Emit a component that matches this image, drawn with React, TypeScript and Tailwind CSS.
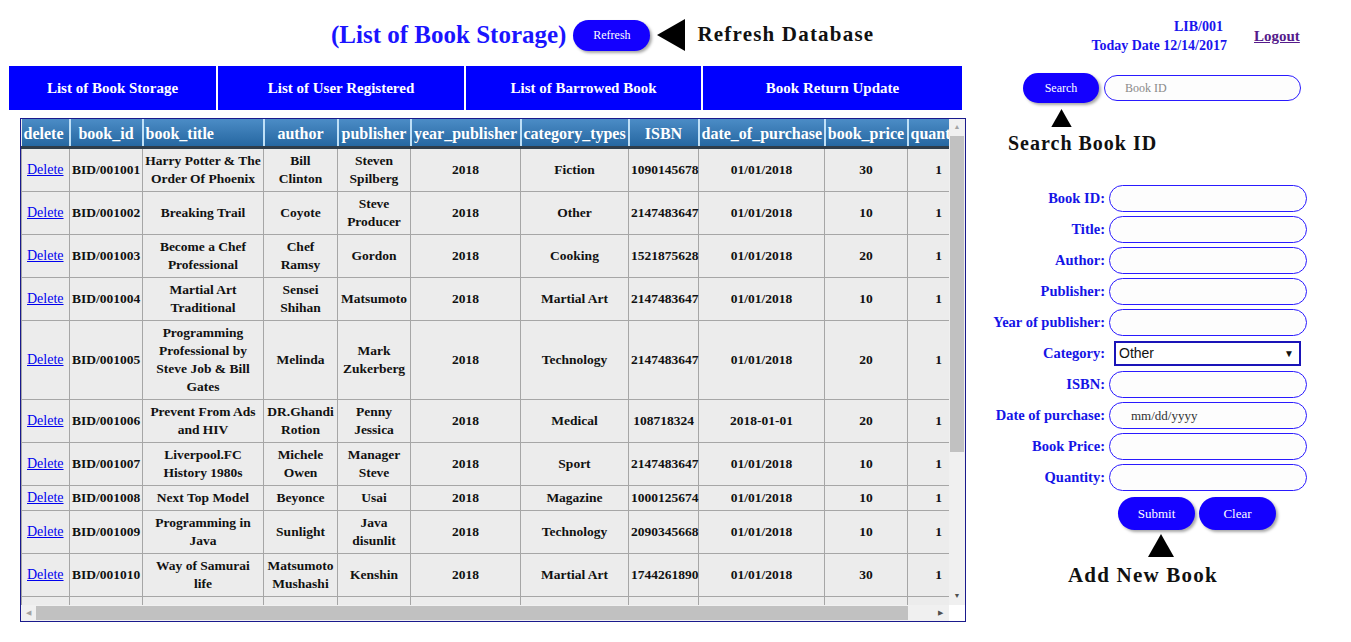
import React from 'react';

type Row = {
  id: string;
  title: string;
  author: string;
  publisher: string;
  year: string;
  category: string;
  isbn: string;
  date: string;
  price: string;
  qty: string;
};

const rows: Row[] = [
  { id: 'BID/001001', title: 'Harry Potter & The\nOrder Of Phoenix', author: 'Bill\nClinton', publisher: 'Steven\nSpilberg', year: '2018', category: 'Fiction', isbn: '1090145678', date: '01/01/2018', price: '30', qty: '1' },
  { id: 'BID/001002', title: 'Breaking Trail', author: 'Coyote', publisher: 'Steve\nProducer', year: '2018', category: 'Other', isbn: '2147483647', date: '01/01/2018', price: '10', qty: '1' },
  { id: 'BID/001003', title: 'Become a Chef\nProfessional', author: 'Chef\nRamsy', publisher: 'Gordon', year: '2018', category: 'Cooking', isbn: '1521875628', date: '01/01/2018', price: '20', qty: '1' },
  { id: 'BID/001004', title: 'Martial Art\nTraditional', author: 'Sensei\nShihan', publisher: 'Matsumoto', year: '2018', category: 'Martial Art', isbn: '2147483647', date: '01/01/2018', price: '10', qty: '1' },
  { id: 'BID/001005', title: 'Programming\nProfessional by\nSteve Job & Bill\nGates', author: 'Melinda', publisher: 'Mark\nZukerberg', year: '2018', category: 'Technology', isbn: '2147483647', date: '01/01/2018', price: '20', qty: '1' },
  { id: 'BID/001006', title: 'Prevent From Ads\nand HIV', author: 'DR.Ghandi\nRotion', publisher: 'Penny\nJessica', year: '2018', category: 'Medical', isbn: '108718324', date: '2018-01-01', price: '20', qty: '1' },
  { id: 'BID/001007', title: 'Liverpool.FC\nHistory 1980s', author: 'Michele\nOwen', publisher: 'Manager\nSteve', year: '2018', category: 'Sport', isbn: '2147483647', date: '01/01/2018', price: '10', qty: '1' },
  { id: 'BID/001008', title: 'Next Top Model', author: 'Beyonce', publisher: 'Usai', year: '2018', category: 'Magazine', isbn: '1000125674', date: '01/01/2018', price: '10', qty: '1' },
  { id: 'BID/001009', title: 'Programming in\nJava', author: 'Sunlight', publisher: 'Java\ndisunlit', year: '2018', category: 'Technology', isbn: '2090345668', date: '01/01/2018', price: '10', qty: '1' },
  { id: 'BID/001010', title: 'Way of Samurai\nlife', author: 'Matsumoto\nMushashi', publisher: 'Kenshin', year: '2018', category: 'Martial Art', isbn: '1744261890', date: '01/01/2018', price: '30', qty: '1' },
];

const headers = [
  { label: 'delete', w: 'w-[48px]', align: 'text-left' },
  { label: 'book_id', w: 'w-[73px]', align: 'text-center' },
  { label: 'book_title', w: 'w-[121px]', align: 'text-left' },
  { label: 'author', w: 'w-[74px]', align: 'text-center' },
  { label: 'publisher', w: 'w-[73px]', align: 'text-center' },
  { label: 'year_publisher', w: 'w-[110px]', align: 'text-center' },
  { label: 'category_types', w: 'w-[108px]', align: 'text-center' },
  { label: 'ISBN', w: 'w-[70px]', align: 'text-center' },
  { label: 'date_of_purchase', w: 'w-[126px]', align: 'text-center' },
  { label: 'book_price', w: 'w-[83px]', align: 'text-center' },
  { label: 'quantity', w: 'w-[62px]', align: 'text-left' },
];

const formFields = ['Book ID:', 'Title:', 'Author:', 'Publisher:', 'Year of publisher:'];
const formFields2 = ['ISBN:', 'Date of purchase:', 'Book Price:', 'Quantity:'];

const serif = "font-['Palatino_Linotype','Book_Antiqua','Liberation_Serif',serif]";

function PillButton({ label, className }: { label: string; className: string }) {
  return (
    <button
      className={`rounded-full bg-[#1400ff] text-[12px] text-white shadow-[2px_2px_3px_rgba(0,0,0,0.35)] ${className}`}
    >
      {label}
    </button>
  );
}

function Cell({ children, className = '' }: { children: React.ReactNode; className?: string }) {
  return (
    <td
      className={`border border-[#a6a6a6] px-[2px] py-[3px] align-middle text-[13.5px] leading-[18px] font-bold text-[#111] whitespace-pre-line ${className}`}
    >
      {children}
    </td>
  );
}

function BookTable() {
  return (
    <div className="ml-[20px] flex h-[504px] w-[946px] flex-col border border-[#1a1a8c] bg-white">
      <div className="flex h-[486px]">
        <div className="flex-1 overflow-hidden">
          <table className="w-[948px] table-fixed border-collapse bg-[#ececec]">
            <colgroup>
              {headers.map((h) => (
                <col key={h.label} className={h.w} />
              ))}
            </colgroup>
            <thead>
              <tr className="h-[28px] bg-gradient-to-b from-[#4b8cc6] to-[#2466a0]">
                {headers.map((h) => (
                  <th
                    key={h.label}
                    className={`overflow-hidden whitespace-nowrap border-r-2 border-b-[3px] border-r-[#bfe0f7] border-b-[#2f3d4a] px-[2px] pt-[4px] pb-0 text-[16px] leading-[20px] font-bold text-white ${h.align}`}
                  >
                    {h.label}
                  </th>
                ))}
              </tr>
            </thead>
            <tbody>
              {rows.map((r) => (
                <tr key={r.id}>
                  <Cell className="pl-[5px] text-left">
                    <a className="text-[14px] font-normal text-[#0000ee] underline" href="#">
                      Delete
                    </a>
                  </Cell>
                  <Cell className="text-left">{r.id}</Cell>
                  <Cell className="text-center">{r.title}</Cell>
                  <Cell className="text-center">{r.author}</Cell>
                  <Cell className="text-center">{r.publisher}</Cell>
                  <Cell className="text-center">{r.year}</Cell>
                  <Cell className="text-center">{r.category}</Cell>
                  <Cell className="text-center">{r.isbn}</Cell>
                  <Cell className="text-center">{r.date}</Cell>
                  <Cell className="text-center">{r.price}</Cell>
                  <Cell className="text-center">{r.qty}</Cell>
                </tr>
              ))}
              <tr className="h-[43px]">
                {headers.map((h) => (
                  <td key={h.label} className="border border-[#a6a6a6]" />
                ))}
              </tr>
            </tbody>
          </table>
        </div>
        {/* vertical scrollbar */}
        <div className="flex w-[16px] flex-col bg-[#f0f0f0]">
          <div className="flex h-[17px] items-center justify-center text-[7px] text-[#a3a3a3]">▲</div>
          <div className="mx-[1px] h-[316px] bg-[#c1c1c1]" />
          <div className="flex-1" />
          <div className="flex h-[17px] items-center justify-center text-[7px] text-[#505050]">▼</div>
        </div>
      </div>
      {/* horizontal scrollbar */}
      <div className="flex h-[16px]">
        <div className="flex flex-1 items-center bg-[#f0f0f0]">
          <div className="flex w-[15px] items-center justify-center text-[7px] text-[#a3a3a3]">◀</div>
          <div className="h-[14px] w-[872px] bg-[#c1c1c1]" />
          <div className="flex-1" />
          <div className="flex w-[17px] items-center justify-center text-[7px] text-[#505050]">▶</div>
        </div>
        <div className="w-[16px] bg-white" />
      </div>
    </div>
  );
}

function TriangleUp({ className }: { className: string }) {
  return (
    <svg viewBox="0 0 26 23" className={className}>
      <polygon points="13,0 26,23 0,23" fill="#000" />
    </svg>
  );
}

export default function App() {
  return (
    <div className={`flex h-[642px] w-[1351px] bg-white ${serif}`}>
      {/* left column */}
      <div className="w-[966px] shrink-0">
        <div className="flex h-[66px] items-center pl-[331px] pt-[4px]">
          <h1 className="text-[25px] font-bold text-[#1a14ff]">(List of Book Storage)</h1>
          <PillButton label="Refresh" className="ml-[7px] h-[31px] w-[77px]" />
          <svg viewBox="0 0 28 32" className="ml-[7px] h-[32px] w-[28px]">
            <polygon points="0,16 28,0 28,32" fill="#000" />
          </svg>
          <span className="ml-[12px] text-[21px] font-bold tracking-[1.2px] text-[#111]">Refresh Database</span>
        </div>

        <nav className="ml-[9px] flex h-[44px] w-[953px] gap-[2px] text-[15px] font-bold text-white">
          <div className="flex w-[207px] items-center justify-center bg-[#0000ff]">List of Book Storage</div>
          <div className="flex w-[246px] items-center justify-center bg-[#0000ff]">List of User Registered</div>
          <div className="flex w-[235px] items-center justify-center bg-[#0000ff]">List of Barrowed Book</div>
          <div className="flex w-[259px] items-center justify-center bg-[#0000ff]">Book Return Update</div>
        </nav>

        <div className="mt-[8px]">
          <BookTable />
        </div>
      </div>

      {/* right column */}
      <div className="flex-1">
        <div className="flex items-center pt-[17px]">
          <div className="ml-[120px] w-[141px] text-right text-[14px] leading-[19px] font-bold text-[#1a14ee]">
            <div className="pr-[4px]">LIB/001</div>
            <div>Today Date 12/14/2017</div>
          </div>
          <a href="#" className="ml-[27px] text-[15px] font-bold text-[#551a8b] underline">
            Logout
          </a>
        </div>

        <div className="mt-[18px] flex items-center">
          <PillButton label="Search" className="ml-[57px] h-[30px] w-[76px]" />
          <input
            placeholder="Book ID"
            className="ml-[5px] h-[26px] w-[197px] rounded-full border border-[#2a1aff] bg-[#fdfdfd] pl-[20px] text-[12px] outline-none placeholder:text-[#8a8a8a]"
          />
        </div>

        <TriangleUp className="ml-[84px] mt-[6px] h-[18px] w-[23px]" />
        <div className="ml-[42px] mt-[1px] text-[20px] font-bold tracking-[1px] text-[#111]">Search Book ID</div>

        <div className="mt-[27px] flex flex-col gap-[4px]">
          {formFields.map((f) => (
            <div key={f} className="flex h-[27px] items-center">
              <label className="w-[139px] text-right text-[14.5px] font-bold text-[#1414e6]">{f}</label>
              <input className="ml-[4px] h-[27px] w-[198px] rounded-full border border-[#2a1aff] bg-[#fdfdfd] outline-none" />
            </div>
          ))}
          <div className="flex h-[27px] items-center">
            <label className="w-[139px] text-right text-[14.5px] font-bold text-[#1414e6]">Category:</label>
            <div className="ml-[9px] flex h-[25px] w-[187px] items-center justify-between border-2 border-[#1a14b8] bg-white pl-[3px] pr-[5px] font-['Liberation_Sans',Arial,sans-serif] text-[14px] text-[#111]">
              <span>Other</span>
              <span className="text-[10px]">▼</span>
            </div>
          </div>
          {formFields2.map((f) => (
            <div key={f} className="flex h-[27px] items-center">
              <label className="w-[139px] text-right text-[14.5px] font-bold text-[#1414e6]">{f}</label>
              <input
                placeholder={f === 'Date of purchase:' ? 'mm/dd/yyyy' : ''}
                className="ml-[4px] h-[27px] w-[198px] rounded-full border border-[#2a1aff] bg-[#fdfdfd] pl-[21px] text-[13px] outline-none placeholder:text-[#333]"
              />
            </div>
          ))}
        </div>

        <div className="mt-[6px] ml-[152px] flex gap-[4px]">
          <PillButton label="Submit" className="h-[33px] w-[77px] text-[13px]" />
          <PillButton label="Clear" className="h-[33px] w-[77px] text-[13px]" />
        </div>
        <TriangleUp className="ml-[182px] mt-[4px] h-[23px] w-[26px]" />
        <div className="ml-[102px] mt-[3px] text-[21px] font-bold tracking-[1.2px] text-[#111]">Add New Book</div>
      </div>
    </div>
  );
}
